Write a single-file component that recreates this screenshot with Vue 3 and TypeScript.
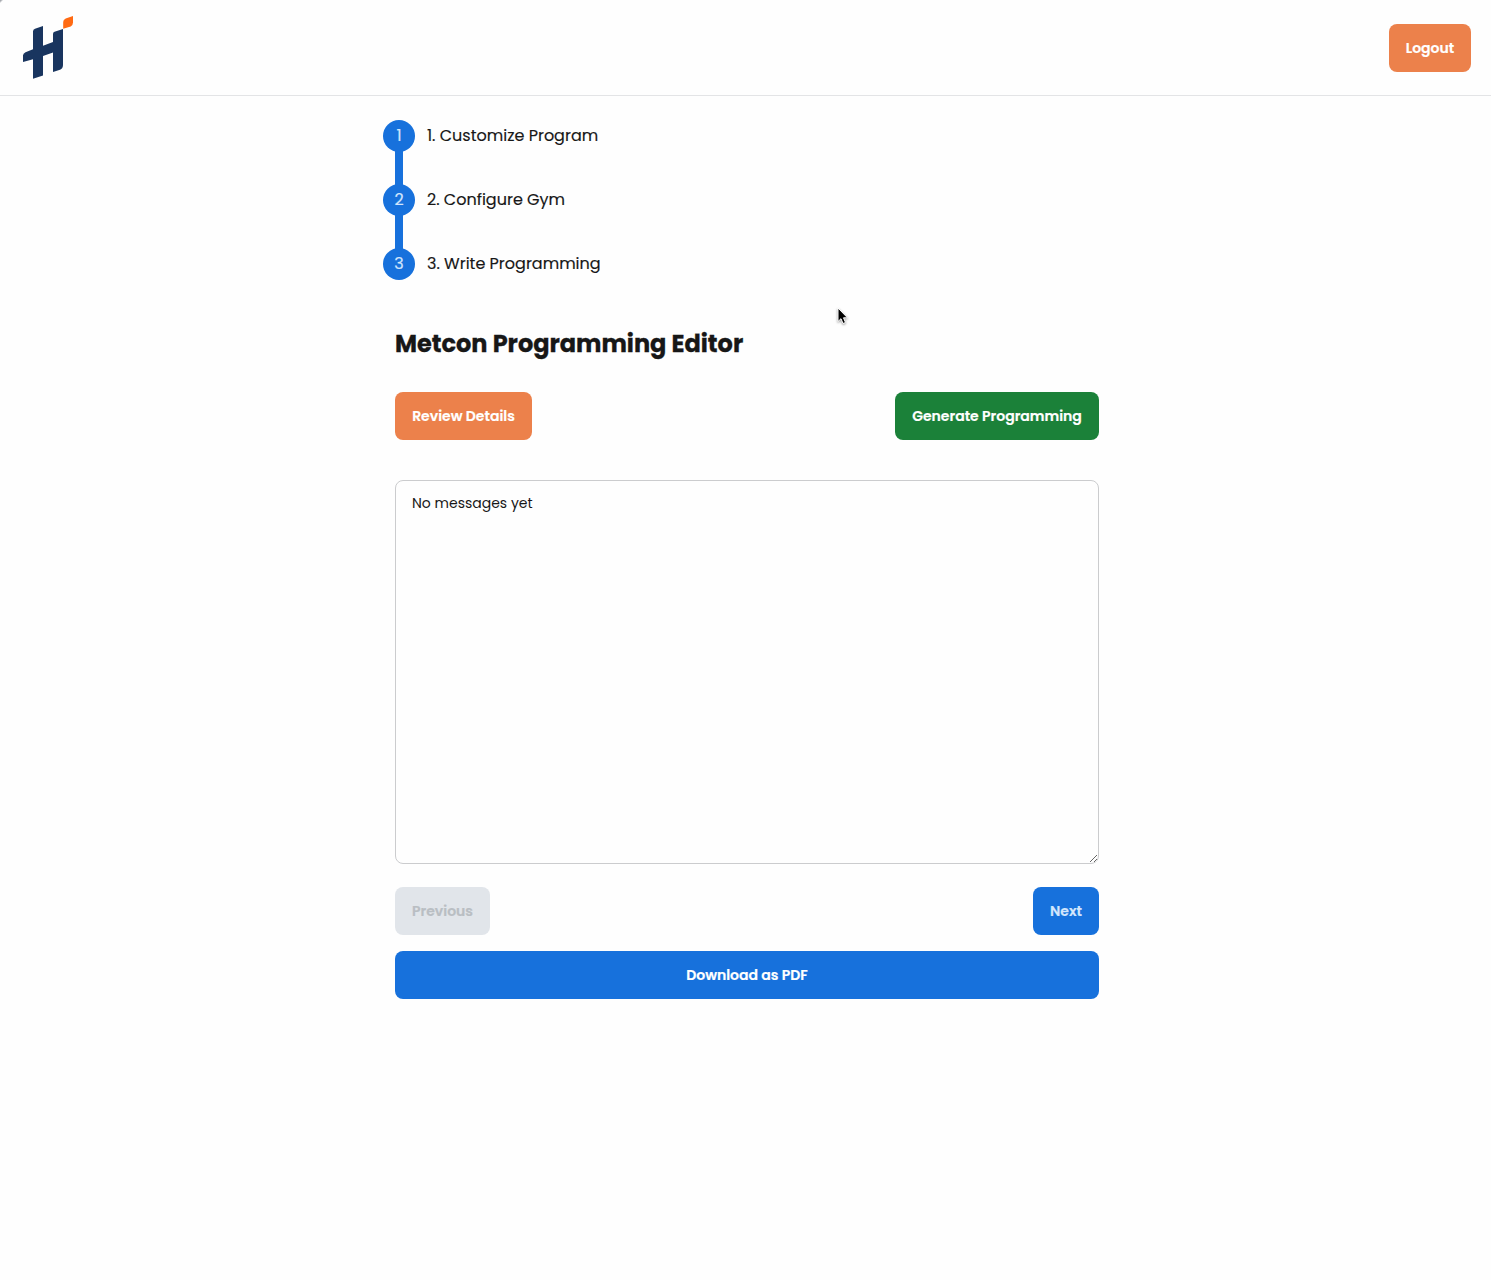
<script setup lang="ts">
import { ref } from 'vue'

interface Step {
  number: number
  label: string
}

const steps: Step[] = [
  { number: 1, label: '1. Customize Program' },
  { number: 2, label: '2. Configure Gym' },
  { number: 3, label: '3. Write Programming' },
]
const messages = ref('No messages yet')
</script>

<template>
  <div class="page">
    <header class="header">
      <svg class="logo" width="56" height="72" viewBox="20 12 56 72" aria-label="Logo">
        <path
          fill="#19355f"
          d="M33 31.5Q33 29.5 35 28.800L43 26V45.700L53 42V34Q53 32.300 54.500 31.700L63 29V65Q63 68.500 60 69.700L53 72V52.500L43 56V75.500L33 78.800V59.300L23 62V55.500Q23 53.500 25.500 52.300L33 49.300Z"
        />
        <path fill="#ff6a13" d="M63.200 28.800V22Q63.200 19.500 65.700 18.500L73 16V22.500Q73 25.300 70.700 26.500Z" />
      </svg>
      <button class="btn orange logout">Logout</button>
    </header>

    <main class="content">
      <ol class="steps">
        <li v-for="step in steps" :key="step.number" class="step">
          <span class="bullet">{{ step.number }}</span>
          <span class="label">{{ step.label }}</span>
        </li>
      </ol>
      <h1 class="title">Metcon Programming Editor</h1>
      <div class="row actions">
        <button class="btn orange review">Review Details</button>
        <button class="btn green generate">Generate Programming</button>
      </div>
      <textarea v-model="messages" class="editor" spellcheck="false"></textarea>
      <div class="row">
        <button class="btn previous" disabled>Previous</button>
        <button class="btn blue next">Next</button>
      </div>
      <button class="btn blue download">Download as PDF</button>
    </main>

    <svg class="cursor" width="16" height="22" viewBox="0 0 16 22" aria-hidden="true">
      <path d="M2 2V15.500L5 12.700L7 17.500L9.500 16.500L7.500 11.800H11.500Z" fill="#000" stroke="#fff" stroke-width="1" />
    </svg>
  </div>
</template>

<style>
body {
  margin: 0;
  background: #fefefe;
}
</style>

<style scoped>
.page {
  position: relative;
  min-height: 1280px;
  background: linear-gradient(135deg, #a5a8ae 1px, #fefefe 2.5px);
  color: #171717;
  font-family: Poppins, Inter, sans-serif;
}
.header {
  display: flex;
  align-items: center;
  justify-content: space-between;
  box-sizing: border-box;
  height: 96px;
  padding: 0 20px;
  border-bottom: 1px solid #e3e4e6;
}
.logo {
  display: block;
}
.content {
  display: flex;
  flex-direction: column;
  width: 704px;
  margin-left: 395px;
  padding-top: 24px;
}
.steps {
  list-style: none;
  margin: 0 0 0 -12px;
  padding: 0;
  display: flex;
  flex-direction: column;
  gap: 32px;
}
.step {
  position: relative;
  display: flex;
  align-items: center;
  gap: 12px;
  height: 32px;
  font-size: 16px;
}
.step + .step::before {
  content: '';
  position: absolute;
  left: 12px;
  top: -34px;
  width: 8px;
  height: 36px;
  background: #1771dc;
}
.bullet {
  display: flex;
  align-items: center;
  justify-content: center;
  width: 32px;
  height: 32px;
  border-radius: 50%;
  background: #1771dc;
  color: #d3e6fc;
  line-height: 24px;
  -webkit-text-stroke: 0.2px #d3e6fc;
}
.label {
  line-height: 24px;
  white-space: nowrap;
  -webkit-text-stroke: 0.15px #171717;
}
.title {
  margin: 48px 0 32px;
  font-size: 24px;
  line-height: 32px;
  font-weight: 700;
  white-space: nowrap;
  -webkit-text-stroke: 0.3px #171717;
}
.row {
  display: flex;
  justify-content: space-between;
}
.actions {
  margin-bottom: 40px;
}
.btn {
  display: flex;
  align-items: center;
  justify-content: center;
  height: 48px;
  padding: 0;
  border: 0;
  border-radius: 8px;
  color: #fff;
  font-family: inherit;
  font-size: 14px;
  font-weight: 600;
  line-height: 14px;
  white-space: nowrap;
  -webkit-text-stroke: 0.2px currentColor;
}
.orange {
  background: #ec814b;
}
.green {
  background: #1b8139;
}
.blue {
  background: #1771dc;
}
.logout {
  width: 82px;
}
.review {
  width: 137px;
}
.generate {
  width: 204px;
}
.previous {
  width: 95px;
  background: #e1e5ea;
  color: #b9bec3;
}
.next {
  width: 66px;
  color: #d3e6fc;
}
.download {
  width: 100%;
  margin-top: 16px;
}
.editor {
  display: block;
  box-sizing: border-box;
  width: 704px;
  height: 384px;
  margin: 0 0 23px;
  padding: 12px 16px;
  border: 1px solid #cbccce;
  border-radius: 8px;
  outline: none;
  background: #fefefe;
  color: #171717;
  font-family: inherit;
  font-size: 14px;
  line-height: 20px;
}
.cursor {
  position: absolute;
  left: 836px;
  top: 306px;
  filter: drop-shadow(0 1px 1px rgba(0, 0, 0, 0.4));
}
</style>
